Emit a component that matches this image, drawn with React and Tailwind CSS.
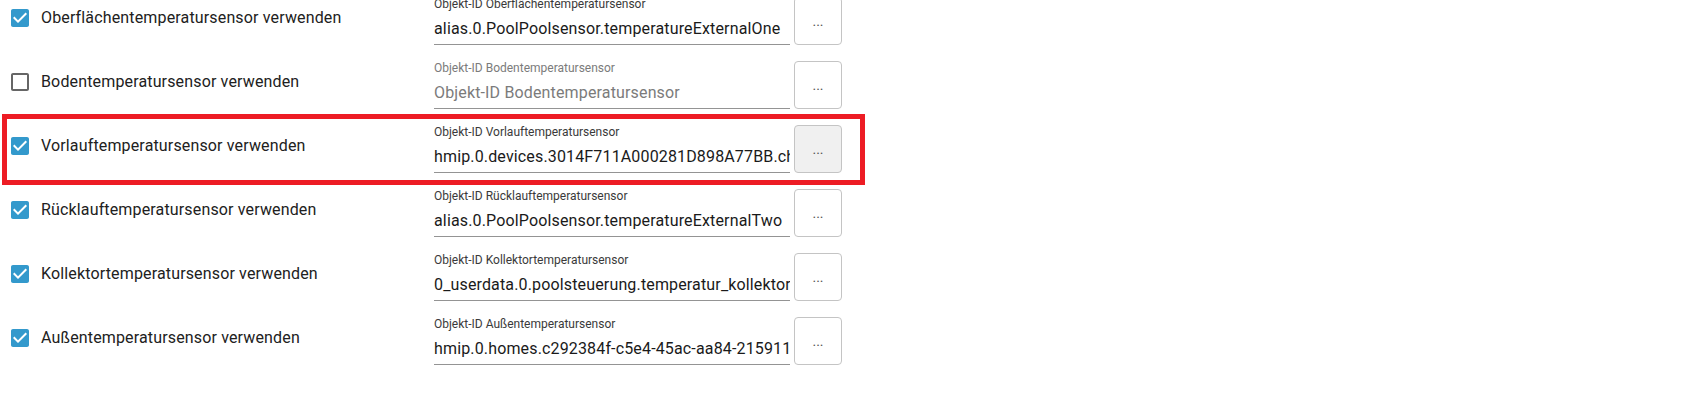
import React from 'react';

const sensors = [
  {
    name: 'Oberflächentemperatursensor verwenden',
    label: 'Objekt-ID Oberflächentemperatursensor',
    value: 'alias.0.PoolPoolsensor.temperatureExternalOne',
    checked: true,
  },
  {
    name: 'Bodentemperatursensor verwenden',
    label: 'Objekt-ID Bodentemperatursensor',
    value: '',
    checked: false,
  },
  {
    name: 'Vorlauftemperatursensor verwenden',
    label: 'Objekt-ID Vorlauftemperatursensor',
    value: 'hmip.0.devices.3014F711A000281D898A77BB.channels.1.actualTemperature',
    checked: true,
    marked: true,
  },
  {
    name: 'Rücklauftemperatursensor verwenden',
    label: 'Objekt-ID Rücklauftemperatursensor',
    value: 'alias.0.PoolPoolsensor.temperatureExternalTwo',
    checked: true,
  },
  {
    name: 'Kollektortemperatursensor verwenden',
    label: 'Objekt-ID Kollektortemperatursensor',
    value: '0_userdata.0.poolsteuerung.temperatur_kollektor',
    checked: true,
  },
  {
    name: 'Außentemperatursensor verwenden',
    label: 'Objekt-ID Außentemperatursensor',
    value: 'hmip.0.homes.c292384f-c5e4-45ac-aa84-215911a8e4b1.weather.temperature',
    checked: true,
  },
];

const CheckIcon = ({ checked }) =>
  checked ? (
    <svg viewBox="0 0 24 24" className="w-6 h-6 text-[#3399cc]" fill="currentColor">
      <path d="M19 3H5c-1.11 0-2 .9-2 2v14c0 1.1.89 2 2 2h14c1.11 0 2-.9 2-2V5c0-1.1-.89-2-2-2zm-9 14l-5-5 1.41-1.41L10 14.17l7.59-7.59L19 8l-9 9z" />
    </svg>
  ) : (
    <svg viewBox="0 0 24 24" className="w-6 h-6 text-[#666666]" fill="currentColor">
      <path d="M19 5v14H5V5h14m0-2H5c-1.1 0-2 .9-2 2v14c0 1.1.9 2 2 2h14c1.1 0 2-.9 2-2V5c0-1.1-.9-2-2-2z" />
    </svg>
  );

const SensorRow = ({ sensor }) => (
  <div className="relative flex items-center h-16">
    <div className="flex items-center w-[434px] pl-[8px] pb-[7px] gap-[9px]">
      <CheckIcon checked={sensor.checked} />
      <span className="text-[16px] leading-[24px] tracking-[0.15px] text-[#212121]">{sensor.name}</span>
    </div>
    <div className="flex flex-col w-[356px] h-12 border-b border-[#949494]">
      <label
        className={`block h-4 text-[12px] leading-[14px] whitespace-nowrap ${
          sensor.checked ? 'text-[#3a3a3a]' : 'text-[#7b7b7b]'
        }`}
      >
        {sensor.label}
      </label>
      <input
        type="text"
        readOnly
        defaultValue={sensor.value}
        placeholder={sensor.label}
        className="w-full h-[23px] mt-[4px] p-0 text-[16px] leading-[23px] tracking-[0.15px] text-[#1a1a1a] placeholder:text-[#7b7b7b] bg-transparent outline-none"
      />
    </div>
    <button
      className={`ml-[4px] w-12 h-12 rounded-[4px] border border-[#c4c4c4] text-[14px] text-[#555555] ${
        sensor.marked ? 'bg-[#f0f0f0]' : 'bg-white'
      }`}
    >
      ...
    </button>
    {sensor.marked && (
      <div className="absolute left-[2px] -top-[3px] w-[863px] h-[71px] border-[5px] border-[#ed1c24] pointer-events-none" />
    )}
  </div>
);

const App = () => {
  return (
    <div
      className="w-[1689px] h-[409px] overflow-hidden bg-white"
      style={{ fontFamily: 'Roboto, "Liberation Sans", sans-serif' }}
    >
      <div className="flex flex-col -mt-[11px]">
        {sensors.map((sensor, index) => (
          <SensorRow key={index} sensor={sensor} />
        ))}
      </div>
    </div>
  );
};

export default App;
